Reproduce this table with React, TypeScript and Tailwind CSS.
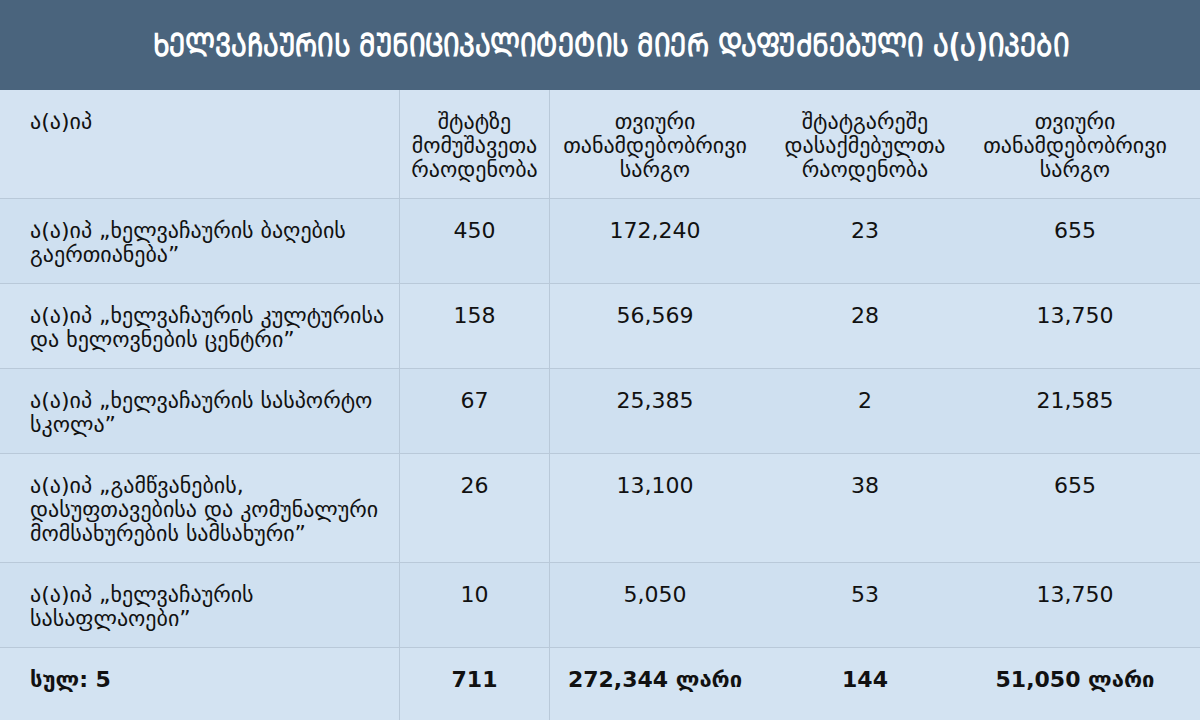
import React from "react";

const toMtavruli = (s: string) =>
  s.replace(/[\u10D0-\u10FA]/g, (c) => String.fromCharCode(c.charCodeAt(0) + 0xbc0));

const title = toMtavruli("ხელვაჩაურის მუნიციპალიტეტის მიერ დაფუძნებული ა(ა)იპები");

const rows = [
  ["ა(ა)იპ „ხელვაჩაურის ბაღების გაერთიანება”", "450", "172,240", "23", "655"],
  ["ა(ა)იპ „ხელვაჩაურის კულტურისა და ხელოვნების ცენტრი”", "158", "56,569", "28", "13,750"],
  ["ა(ა)იპ „ხელვაჩაურის სასპორტო სკოლა”", "67", "25,385", "2", "21,585"],
  ["ა(ა)იპ „გამწვანების, დასუფთავებისა და კომუნალური მომსახურების სამსახური”", "26", "13,100", "38", "655"],
  ["ა(ა)იპ „ხელვაჩაურის სასაფლაოები”", "10", "5,050", "53", "13,750"],
];

const font = { fontFamily: '"DejaVu Sans", "Noto Sans", sans-serif' };

function Row({ cells, bg, bold, tall }: { cells: React.ReactNode[]; bg: string; bold?: boolean; tall?: boolean }) {
  const pad = tall ? "pt-5 pb-7" : "pt-5 pb-4";
  const weight = bold ? "font-bold" : "font-normal";
  return (
    <div className={`grid grid-cols-[400px_150px_210px_210px_1fr] border-b border-[#b9c9d9] ${bg} ${weight}`}>
      <div className={`pl-[30px] pr-2 ${pad} border-r border-[#b9c9d9]`}>{cells[0]}</div>
      <div className={`${pad} text-center border-r border-[#b9c9d9]`}>{cells[1]}</div>
      <div className={`${pad} text-center`}>{cells[2]}</div>
      <div className={`${pad} text-center`}>{cells[3]}</div>
      <div className={`pr-5 ${pad} text-center`}>{cells[4]}</div>
    </div>
  );
}

export default function App() {
  return (
    <div className="w-[1200px] h-[720px] overflow-hidden bg-[#d3e2f1] text-[#111111]" style={font}>
      <div className="h-[90px] bg-[#4a647d] flex items-center justify-center pl-[22px]">
        <h1
          className="text-white font-bold text-[32px] leading-none whitespace-nowrap scale-x-[0.82]"
          style={{ fontFamily: '"DejaVu Sans", sans-serif' }}
        >
          {title}
        </h1>
      </div>
      <div className="text-[22px] leading-[24px]">
        <Row
          bg="bg-[#d4e3f2]"
          cells={[
            "ა(ა)იპ",
            <>შტატზე<br />მომუშავეთა<br />რაოდენობა</>,
            <>თვიური<br />თანამდებობრივი<br />სარგო</>,
            <>შტატგარეშე<br />დასაქმებულთა<br />რაოდენობა</>,
            <>თვიური<br />თანამდებობრივი<br />სარგო</>,
          ]}
        />
        {rows.map((r, i) => (
          <Row key={i} bg={i % 2 === 0 ? "bg-[#cfe0f0]" : "bg-[#d3e3f2]"} cells={r} />
        ))}
        <Row
          bg="bg-[#d3e3f2]"
          bold
          tall
          cells={["სულ: 5", "711", "272,344 ლარი", "144", "51,050 ლარი"]}
        />
      </div>
    </div>
  );
}
